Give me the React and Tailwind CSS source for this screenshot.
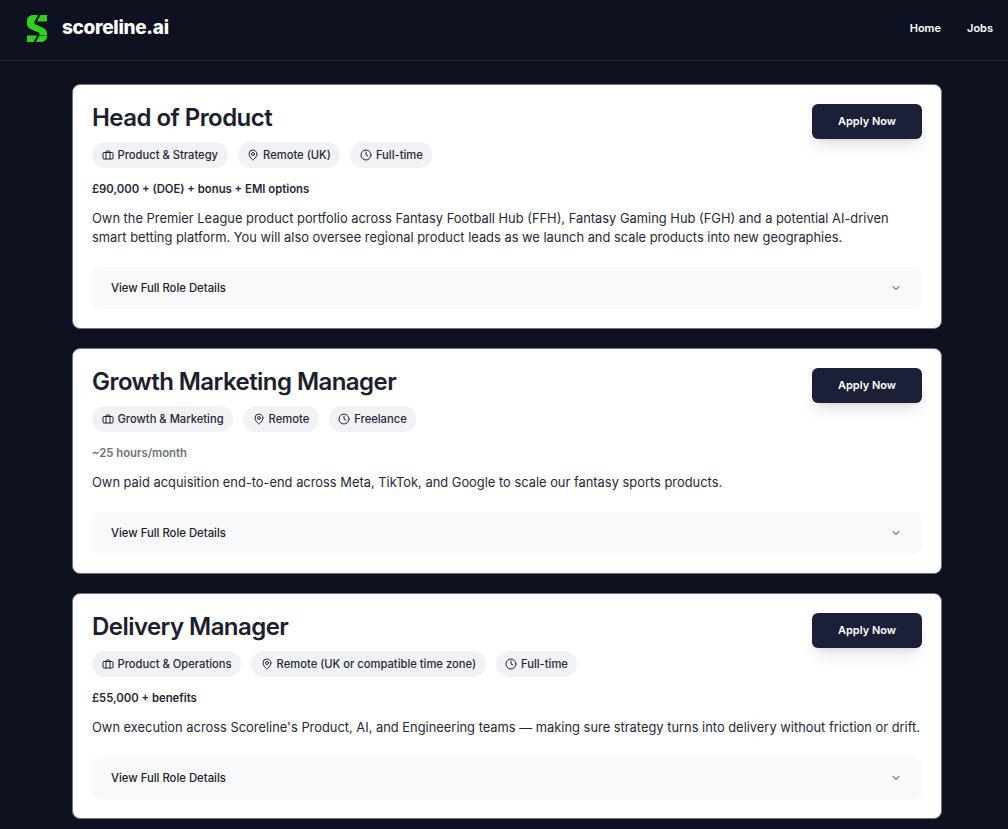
import React from "react";
import { ChevronDown, Clock, MapPin } from "lucide-react";

const Logo = () => (
  <svg width="20" height="27" viewBox="0 0 20 27" fill="#2fd11f">
    <path d="M6 0H11L7.5 6.5V9L15.5 12.5C18 13.6 20 15.5 20 18.5V20H12.5V18L3.5 14C1.5 13 0 11.5 0 9V6C0 2.5 2.5 0 6 0Z" />
    <path d="M13.5 0H20V6.5H10Z" />
    <path d="M14 27H9L12.5 20.5H20V21C20 24.5 17.5 27 14 27Z" />
    <path d="M6.5 27H0V20.5H10Z" />
  </svg>
);

// small briefcase style icon used on the department tag
const DeptIcon = () => (
  <svg width="12" height="12" viewBox="0 0 24 24" fill="none" stroke="currentColor" strokeWidth="2" strokeLinecap="round" strokeLinejoin="round">
    <path d="M8 20V6a2 2 0 0 1 2-2h4a2 2 0 0 1 2 2v14" />
    <rect x="2" y="7" width="20" height="13" rx="2" />
  </svg>
);

const Tag = ({ icon, label }) => (
  <span className="flex h-[26px] items-center gap-[4px] rounded-full bg-[#f1f2f5] px-[9.5px] text-[11.2px] font-medium text-[#1f2937]">
    {icon}
    {label}
  </span>
);

const jobs = [
  {
    title: "Head of Product",
    dept: "Product & Strategy",
    location: "Remote (UK)",
    type: "Full-time",
    pay: "£90,000 + (DOE) + bonus + EMI options",
    payClass: "text-[#1f2937]",
    desc: "Own the Premier League product portfolio across Fantasy Football Hub (FFH), Fantasy Gaming Hub (FGH) and a potential AI-driven smart betting platform. You will also oversee regional product leads as we launch and scale products into new geographies.",
  },
  {
    title: "Growth Marketing Manager",
    dept: "Growth & Marketing",
    location: "Remote",
    type: "Freelance",
    pay: "~25 hours/month",
    payClass: "text-[#6b7280]",
    desc: "Own paid acquisition end-to-end across Meta, TikTok, and Google to scale our fantasy sports products.",
  },
  {
    title: "Delivery Manager",
    dept: "Product & Operations",
    location: "Remote (UK or compatible time zone)",
    type: "Full-time",
    pay: "£55,000 + benefits",
    payClass: "text-[#1f2937]",
    desc: "Own execution across Scoreline's Product, AI, and Engineering teams — making sure strategy turns into delivery without friction or drift.",
  },
];

const JobCard = ({ job }) => (
  <div className="rounded-lg border border-[#6b7280] bg-white px-[19px] pt-[19px] pb-[19px]">
    <div className="flex items-start justify-between">
      <div>
        <h2 className="text-2xl leading-[28px] font-semibold tracking-[-0.55px] text-[#1a202c]">{job.title}</h2>
        <div className="mt-[10px] flex gap-[10px]">
          <Tag icon={<DeptIcon />} label={job.dept} />
          <Tag icon={<MapPin size={12} />} label={job.location} />
          <Tag icon={<Clock size={12} />} label={job.type} />
        </div>
      </div>
      <button className="h-[35px] w-[110px] rounded-md bg-[#1a2038] text-[11px] font-semibold text-white shadow-lg">Apply Now</button>
    </div>
    <p className={`mt-[14px] text-[11.3px] leading-[14px] font-semibold ${job.payClass}`}>{job.pay}</p>
    <p className="mt-[13px] text-[12.88px] leading-[19px] text-[#1f2937]">{job.desc}</p>
    <div className="mt-[20px] flex h-[42px] items-center justify-between rounded-lg bg-[#f8f9fb] pr-5 pl-[19px] text-[11.3px] font-medium text-[#1a202c]">
      View Full Role Details
      <ChevronDown size={12} className="text-[#1f2937]" />
    </div>
  </div>
);

export default function App() {
  return (
    <div className="min-h-[829px] bg-[#0d1120] font-['Inter',sans-serif]">
      <header className="flex h-[61px] items-center justify-between border-b border-[#232838] pr-[15px] pb-[4px] pl-[27px]">
        <div className="flex items-center gap-[15px]">
          <Logo />
          <span className="text-[19px] font-extrabold tracking-[-0.3px] text-white">scoreline.ai</span>
        </div>
        <nav className="flex gap-[26px] text-[11px] font-semibold text-white">
          <a>Home</a>
          <a>Jobs</a>
        </nav>
      </header>
      <main className="mx-[72px] flex w-[870px] flex-col gap-[19px] pt-[23px] pb-[10px]">
        {jobs.map((job) => (
          <JobCard key={job.title} job={job} />
        ))}
      </main>
    </div>
  );
}
